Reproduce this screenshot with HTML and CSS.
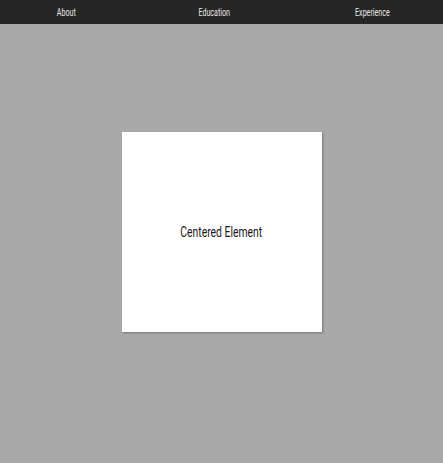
FILE: index.html
```html
<!DOCTYPE html>
<html lang="en">
<head>
<meta charset="utf-8">
<title>Centered Element</title>
<link rel="stylesheet" href="styles.css">
</head>
<body>
<nav class="nav">
  <a class="nav-link" href="#about"><span class="squish">About</span></a>
  <a class="nav-link" href="#education"><span class="squish">Education</span></a>
  <a class="nav-link" href="#experience"><span class="squish">Experience</span></a>
</nav>
<main class="stage">
  <div class="card"><span class="card-text">Centered Element</span></div>
</main>
</body>
</html>
```
FILE: styles.css
```css
html, body {
  margin: 0;
  padding: 0;
}
body {
  background: #a9a9a9;
  font-family: Roboto, "Liberation Sans", sans-serif;
}
.nav {
  position: fixed;
  top: 0;
  left: 0;
  right: 0;
  height: 24px;
  box-sizing: border-box;
  padding: 1px 0 0 53px;
  background: #262626;
  display: flex;
  gap: 112px;
  align-items: center;
  z-index: 2;
}
.nav-link {
  color: #e6e6e6;
  text-decoration: none;
  font-size: 10px;
  line-height: 23px;
}
.squish {
  display: inline-block;
  transform: scaleX(0.71);
}
.stage {
  min-height: 100vh;
  display: grid;
  place-items: center;
}
.card {
  width: 200px;
  height: 200px;
  background: #fff;
  box-shadow: 1px 1px 2px rgba(0, 0, 0, 0.3);
  display: flex;
  align-items: center;
  justify-content: center;
}
.card-text {
  display: inline-block;
  font-size: 14px;
  color: #1a1a1a;
  transform: scaleX(0.74);
  padding-top: 1px;
}
```
